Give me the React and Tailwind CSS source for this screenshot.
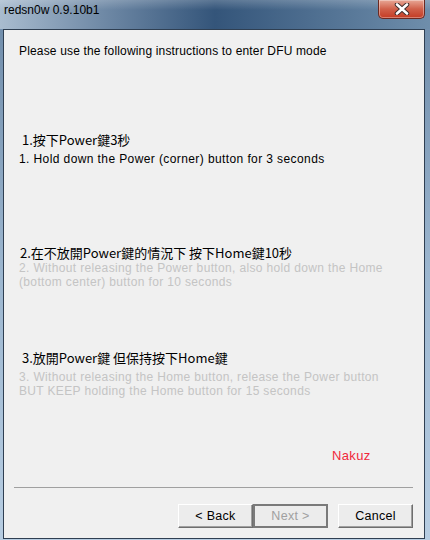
import React from 'react';

// Win7-style wizard window: redsn0w DFU instructions
const ui = { fontFamily: '"Liberation Sans", "Noto Sans CJK TC", sans-serif' };
const cjk = { fontFamily: '"Noto Sans CJK TC", "Liberation Sans", sans-serif' };

function CloseButton() {
  return (
    <div className="absolute right-[5px] top-0 flex h-[19px] w-[47px] items-center justify-center rounded-b-[5px] border border-t-0 border-[#6b2a22] bg-gradient-to-b from-[#e7a796] via-[#d0604a] to-[#c43a22] shadow-[inset_0_0_0_1px_rgba(255,255,255,0.35)]">
      <svg width="16" height="12" viewBox="0 0 16 12">
        <path d="M3 1.5 L13 10.5 M13 1.5 L3 10.5" stroke="#3a2a2a" strokeWidth="4.5" strokeLinecap="round" />
        <path d="M3 1.5 L13 10.5 M13 1.5 L3 10.5" stroke="#ffffff" strokeWidth="2.6" strokeLinecap="round" />
      </svg>
    </div>
  );
}

function WinButton({ children, focus }) {
  return (
    <div
      className={
        'flex h-[24px] w-[75px] items-center justify-center text-[12.5px] tracking-[0.3px] ' +
        (focus
          ? 'border-2 border-[#7a7a7a] bg-[#ececec] text-[#a0a0a0]'
          : 'border border-t-[#ffffff] border-l-[#ffffff] border-b-[#6e6e6e] border-r-[#6e6e6e] bg-[#ececec] text-black shadow-[inset_-1px_-1px_0_#a0a0a0]')
      }
      style={ui}
    >
      {children}
    </div>
  );
}

export default function App() {
  return (
    <div className="relative h-[540px] w-[430px] overflow-hidden bg-gradient-to-b from-[#6d8aa8] via-[#9cb6cf] to-[#b7cde2]">
      {/* title bar */}
      <div className="relative h-[29px] bg-gradient-to-r from-[#a9bccf] via-[#34557a] to-[#6f8eab]">
        <div className="absolute inset-x-0 top-0 h-[10px] bg-gradient-to-b from-white/20 to-transparent" />
        <span className="absolute left-[4px] top-[2px] text-[12px] leading-[16px] text-black" style={ui}>
          redsn0w 0.9.10b1
        </span>
        <CloseButton />
      </div>

      {/* client area */}
      <div className="ml-[3px] mr-[5px] flex h-[510px] flex-col border border-[#2f3f52] bg-[#f0f0f0]">
        <div className="flex flex-col pl-[15px] pr-[4px] pt-[14px] text-[12px] leading-[14px] tracking-[0.35px] text-black" style={ui}>
          <p className="tracking-[0.16px]">Please use the following instructions to enter DFU mode</p>

          <p className="mt-[74px] pl-[3px] text-[13px] leading-[16px] tracking-normal" style={cjk}>1.按下Power鍵3秒</p>
          <p className="mt-[4px] tracking-[0.4px]">1. Hold down the Power (corner) button for 3 seconds</p>

          <p className="mt-[79px] pl-[1px] text-[13px] leading-[16px] tracking-normal" style={cjk}>2.在不放開Power鍵的情況下 按下Home鍵10秒</p>
          <p className="text-[#c4c4c4]">
            2. Without releasing the Power button, also hold down the Home
            <br />
            (bottom center) button for 10 seconds
          </p>

          <p className="mt-[61px] pl-[3px] text-[13px] leading-[16px] tracking-normal" style={cjk}>3.放開Power鍵 但保持按下Home鍵</p>
          <p className="mt-[4px] text-[#c4c4c4]">
            3. Without releasing the Home button, release the Power button
            <br />
            BUT KEEP holding the Home button for 15 seconds
          </p>

          <p className="mt-[51px] pl-[313px] text-[13px] text-[#f0283c]">Nakuz</p>
        </div>

        <div className="ml-[10px] mr-[11px] mt-[24px] h-[2px] border-t border-[#a0a0a0] border-b-white" />

        <div className="mr-[11px] mt-[15px] flex justify-end">
          <WinButton>&lt; Back</WinButton>
          <WinButton focus>Next &gt;</WinButton>
          <div className="w-[10px]" />
          <WinButton>Cancel</WinButton>
        </div>
      </div>
    </div>
  );
}
